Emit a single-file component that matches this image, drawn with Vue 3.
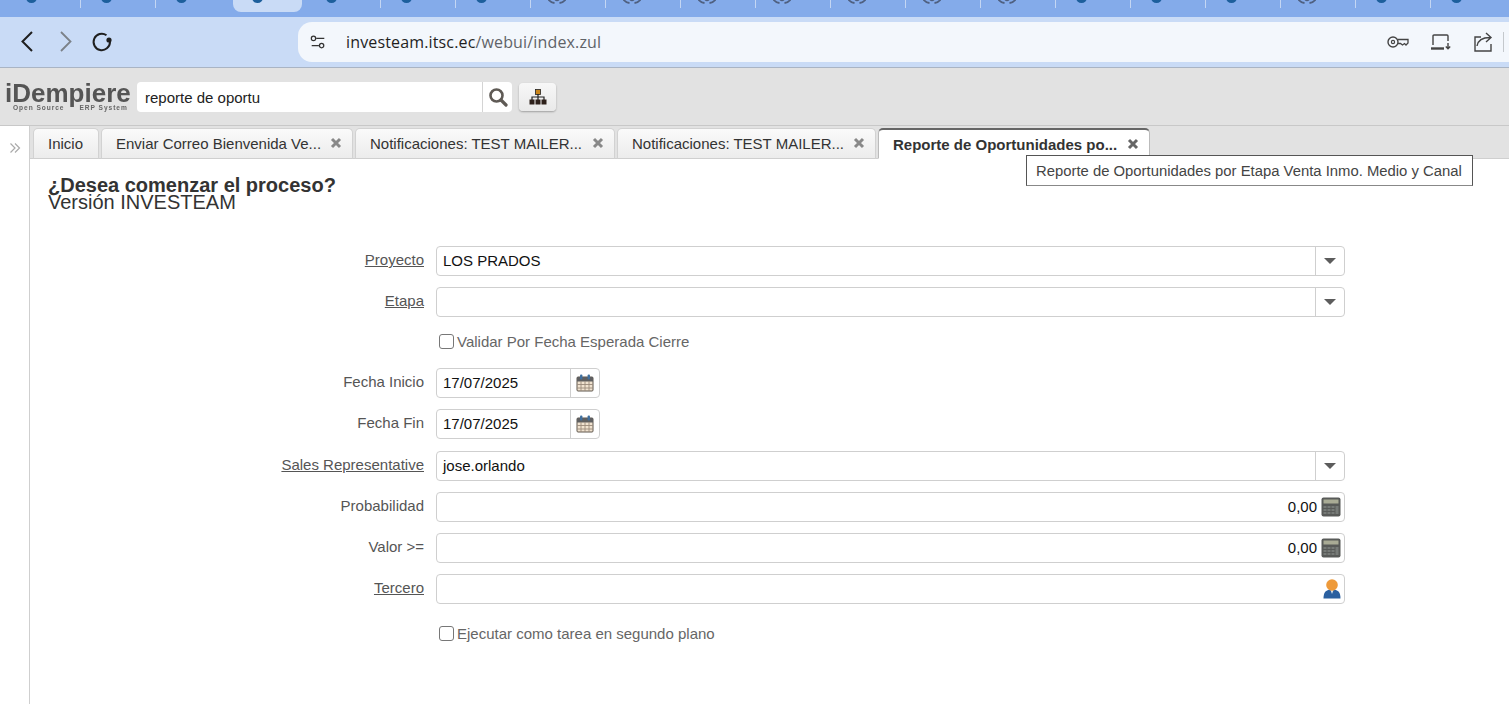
<template>
  <div class="page">
    <!-- browser chrome -->
    <div class="browser-tabs">
      <div v-for="(t, i) in browserTabs" :key="i" class="b-tab" :class="{ active: t === 'active' }">
        <svg v-if="t === 'ring'" class="ring" viewBox="0 0 18 18" width="18" height="18">
          <path d="M0 13 Q2.5 16.5 6.5 17 M11.5 17 Q15.5 16.5 18 13" fill="none" stroke="#4f6080" stroke-width="1.8"/>
          <path d="M7 13.5 Q9 15.5 11 13.5" fill="none" stroke="#4f6080" stroke-width="1.6"/>
        </svg>
        <span v-else class="favicon"></span>
      </div>
    </div>
    <div class="browser-bar">
      <div class="nav-btns">
        <svg class="nav" viewBox="0 0 24 24" width="24" height="24"><path d="M17 3 L7.5 12.5 L17 22" transform="translate(-1 -1)" fill="none" stroke="#1f1f1f" stroke-width="2"/></svg>
        <svg class="nav" viewBox="0 0 24 24" width="24" height="24"><path d="M8 3 L17.5 12.5 L8 22" transform="translate(0 -1)" fill="none" stroke="#7b8188" stroke-width="1.8"/></svg>
        <svg class="nav" viewBox="0 0 24 24" width="24" height="24"><path d="M20 12 A8.2 8.2 0 1 1 16.5 5.2" fill="none" stroke="#1f1f1f" stroke-width="2"/><circle cx="19" cy="10" r="2.6" fill="#1f1f1f"/></svg>
      </div>
      <div class="omnibox">
        <svg viewBox="0 0 20 20" width="18" height="18" class="tune"><circle cx="5" cy="6" r="2.4" fill="none" stroke="#333" stroke-width="1.4"/><path d="M8 6 H17 M3 14 H11" stroke="#333" stroke-width="1.4"/><circle cx="14" cy="14" r="2.4" fill="none" stroke="#333" stroke-width="1.4"/></svg>
        <span class="url"><span class="host">investeam.itsc.ec</span>/webui/index.zul</span>
        <div class="omni-icons">
          <svg viewBox="0 0 22 14" width="22" height="14"><circle cx="6" cy="7" r="5" fill="none" stroke="#444" stroke-width="1.4"/><circle cx="6" cy="7" r="1.6" fill="none" stroke="#444" stroke-width="1.2"/><path d="M11 4.5 H21 V8 L19 10 L17.5 8.5 L15.5 10 L13.5 8.5 H11" fill="none" stroke="#444" stroke-width="1.3"/></svg>
          <svg viewBox="0 0 22 18" width="22" height="18"><path d="M3 12 V3 Q3 2 4 2 H17 Q18 2 18 3 V8" fill="none" stroke="#444" stroke-width="1.4"/><path d="M1 15.5 H14" stroke="#444" stroke-width="2.4"/><path d="M18 10 V15.5 M15.8 13.5 L18 15.8 L20.2 13.5" fill="none" stroke="#444" stroke-width="1.4"/></svg>
          <svg viewBox="0 0 20 20" width="20" height="20"><path d="M8 5 H2 V19 H18 V12" fill="none" stroke="#444" stroke-width="1.4"/><path d="M4 14 C5 8 10 5.5 17 5.5 M13 1 L18 5.5 L13 10" fill="none" stroke="#444" stroke-width="1.4"/></svg>
          <span class="omni-sep"></span>
        </div>
      </div>
    </div>

    <!-- iDempiere header -->
    <header class="app-header">
      <div class="logo">
        <span class="logo-name">iDempiere</span>
        <span class="logo-sub"><span>Open Source</span><span>ERP System</span></span>
      </div>
      <div class="search">
        <span class="search-text">reporte de oportu</span>
        <span class="search-btn">
          <svg viewBox="0 0 20 20" width="20" height="20"><circle cx="8.5" cy="8.5" r="6" fill="none" stroke="#5f5a55" stroke-width="2.6"/><path d="M13 13 L18 18" stroke="#5f5a55" stroke-width="3.2" stroke-linecap="round"/></svg>
        </span>
      </div>
      <button class="tree-btn">
        <svg viewBox="0 0 18 16" width="18" height="16"><rect x="6.5" y="0.5" width="5" height="5" fill="#c9851c" stroke="#222" stroke-width="0.8"/><path d="M9 5 V8 M3 11 V8 H15 V11 M9 8 V11" fill="none" stroke="#222" stroke-width="1.2"/><rect x="0.5" y="10.5" width="5" height="5" fill="#2e211b"/><rect x="6.5" y="10.5" width="5" height="5" fill="#2e211b"/><rect x="12.5" y="10.5" width="5" height="5" fill="#2e211b"/></svg>
      </button>
    </header>

    <div class="workspace">
      <aside class="side">
        <svg viewBox="0 0 12 12" width="12" height="12"><path d="M1.5 1.5 L6 6 L1.5 10.5 M6 1.5 L10.5 6 L6 10.5" fill="none" stroke="#aaa" stroke-width="1.2"/></svg>
      </aside>

      <main class="main">
        <div class="tabstrip">
          <div v-for="(tab, i) in tabs" :key="i" class="tab" :class="{ selected: tab.selected }" :style="{ width: tab.width + 'px' }">
            <span class="tab-label">{{ tab.label }}</span>
            <svg v-if="tab.close" class="tab-x" viewBox="0 0 12 12" width="12" height="12"><path d="M2 2 L10 10 M10 2 L2 10" stroke="currentColor" stroke-width="3"/></svg>
          </div>
        </div>

        <section class="content">
          <div class="process-head">
            <h2>¿Desea comenzar el proceso?</h2>
            <p>Versión INVESTEAM</p>
          </div>

          <div class="form">
            <div v-for="f in fields" :key="f.label" class="row" :class="f.rowClass">
              <label v-if="f.type !== 'check'" class="lbl" :class="{ link: f.link }">{{ f.label }}</label>
              <span v-else></span>

              <label v-if="f.type === 'check'" class="check">
                <input type="checkbox" />
                <span>{{ f.label }}</span>
              </label>

              <div v-else-if="f.type === 'combo'" class="input">
                <span class="val">{{ f.value }}</span>
                <span class="combo-btn"><i class="caret"></i></span>
              </div>

              <div v-else-if="f.type === 'date'" class="input date">
                <span class="val">{{ f.value }}</span>
                <span class="date-btn">
                  <svg viewBox="0 0 18 18" width="18" height="18">
                    <rect x="1" y="3" width="16" height="14" rx="1" fill="#f0e2cf" stroke="#5f564c" stroke-width="1"/>
                    <rect x="1" y="3" width="16" height="4.5" fill="#5f5f60"/>
                    <path d="M1 10.5 H17 M1 14 H17 M5 7 V17 M9 7 V17 M13 7 V17" stroke="#9a8a7a" stroke-width="0.9"/>
                    <rect x="4" y="0.5" width="2.4" height="5" rx="1" fill="#3f6f9f"/>
                    <rect x="11.6" y="0.5" width="2.4" height="5" rx="1" fill="#3f6f9f"/>
                  </svg>
                </span>
              </div>

              <div v-else-if="f.type === 'number'" class="input number">
                <span class="val">{{ f.value }}</span>
                <svg class="calc" viewBox="0 0 20 20" width="20" height="20">
                  <rect x="0.5" y="0.5" width="19" height="19" rx="2" fill="#585a58"/>
                  <rect x="2.5" y="2.5" width="15" height="4" fill="#a9ab95"/>
                  <g fill="#767a77">
                    <rect x="2.5" y="9" width="3" height="2"/><rect x="6.5" y="9" width="3" height="2"/><rect x="10.5" y="9" width="3" height="2"/>
                    <rect x="2.5" y="12" width="3" height="2"/><rect x="6.5" y="12" width="3" height="2"/><rect x="10.5" y="12" width="3" height="2"/>
                    <rect x="2.5" y="15" width="3" height="2"/><rect x="6.5" y="15" width="3" height="2"/><rect x="10.5" y="15" width="3" height="2"/>
                    <rect x="14.5" y="9" width="3" height="8"/>
                  </g>
                </svg>
              </div>

              <div v-else class="input person">
                <svg viewBox="0 0 18 20" width="18" height="20">
                  <path d="M0.5 19.5 C0.5 13 3 10.5 9 10.5 C15 10.5 17.5 13 17.5 19.5 Z" fill="#2b60a0"/>
                  <path d="M7.5 11 L9 15 L10.5 11 Z" fill="#dfe6ee"/>
                  <circle cx="9" cy="6" r="5.8" fill="#ee9a3a"/>
                </svg>
              </div>
            </div>
          </div>

          <div class="tooltip">Reporte de Oportunidades por Etapa Venta Inmo. Medio y Canal</div>
        </section>
      </main>
    </div>
  </div>
</template>

<script setup>
// iconos de las pestañas del navegador: la mayoria azules, algunas con anillo gris
const browserTabs = [
  'dot', 'dot', 'dot', 'active', 'dot', 'dot', 'dot',
  'ring', 'ring', 'ring', 'ring', 'ring', 'ring', 'ring',
  'dot', 'dot', 'dot', 'ring', 'dot', 'dot'
]

const tabs = [
  { label: 'Inicio', width: 66 },
  { label: 'Enviar Correo Bienvenida Ve...', width: 252, close: true },
  { label: 'Notificaciones: TEST MAILER...', width: 260, close: true },
  { label: 'Notificaciones: TEST MAILER...', width: 259, close: true },
  { label: 'Reporte de Oportunidades po...', width: 272, close: true, selected: true }
]

const fields = [
  { label: 'Proyecto', type: 'combo', value: 'LOS PRADOS', link: true },
  { label: 'Etapa', type: 'combo', value: '', link: true },
  { label: 'Validar Por Fecha Esperada Cierre', type: 'check', rowClass: 'tight' },
  { label: 'Fecha Inicio', type: 'date', value: '17/07/2025' },
  { label: 'Fecha Fin', type: 'date', value: '17/07/2025', rowClass: 'wide' },
  { label: 'Sales Representative', type: 'combo', value: 'jose.orlando', link: true },
  { label: 'Probabilidad', type: 'number', value: '0,00' },
  { label: 'Valor >=', type: 'number', value: '0,00' },
  { label: 'Tercero', type: 'search', link: true, rowClass: 'wider' },
  { label: 'Ejecutar como tarea en segundo plano', type: 'check' }
]
</script>

<style>
html, body { margin: 0; padding: 0; overflow: hidden; }
</style>

<style scoped>
.page {
  width: 1509px;
  height: 704px;
  overflow: hidden;
  display: flex;
  flex-direction: column;
  background: #fff;
  font-family: "Liberation Sans", Arial, sans-serif;
}

/* Browser */
.browser-tabs {
  height: 17px;
  flex: none;
  display: flex;
  padding-left: 5px;
  background: #84abea;
  overflow: hidden;
}
.b-tab {
  width: 75px;
  flex: none;
  box-sizing: border-box;
  height: 12px;
  border-left: 1px solid #c4d6f3;
  margin-top: -4px;
  padding-left: 20px;
  display: flex;
  overflow: hidden;
}
.b-tab:first-child { border-left-color: transparent; }
.b-tab.active { background: #c9dbf6; border: 0; margin: -4px 3px 0; width: 69px; height: 16px; padding-left: 19px; border-radius: 0 0 8px 8px; }
.b-tab.active + .b-tab { border-left-color: transparent; }
.favicon { width: 11px; height: 11px; border-radius: 50%; margin-top: -4px; flex: none; background: #1d5f9c; }
.ring { flex: none; margin: -10px 0 0 -3px; }

.browser-bar {
  height: 50px;
  flex: none;
  display: flex;
  align-items: center;
  background: #c9dbf6;
  border-bottom: 1px solid #a9b4c4;
}
.nav-btns { width: 298px; display: flex; gap: 13px; padding-left: 16px; box-sizing: border-box; }
.omnibox {
  flex: 1;
  height: 40px;
  display: flex;
  align-items: center;
  background: #f3f7fc;
  border-radius: 14px 0 0 14px;
  padding-left: 11px;
}
.tune { margin-right: 18px; }
.url { font-family: "Open Sans", sans-serif; font-size: 16px; color: #5f6368; letter-spacing: 0.15px; margin-left: 1px; }
.host { color: #1f1f1f; }
.omni-icons { margin-left: auto; display: flex; align-items: center; gap: 21px; padding-right: 5px; }
.omni-sep { width: 1px; height: 20px; background: #c4c8cc; margin-left: -11px; }

/* App header */
.app-header {
  height: 58px;
  flex: none;
  box-sizing: border-box;
  display: flex;
  align-items: center;
  background: #e2e2e2;
  border-bottom: 1px solid #c8c8c8;
  padding: 0 0 0 5px;
}
.logo { width: 132px; display: flex; flex-direction: column; color: #555; filter: blur(0.35px); margin-top: 1px; }
.logo-name { font-weight: 700; font-size: 26px; line-height: 20px; white-space: nowrap; }
.logo-sub { display: flex; gap: 15px; padding: 1px 0 0 8px; font-size: 6.6px; font-weight: 700; line-height: 7px; letter-spacing: 0.95px; color: #666; white-space: nowrap; }
.search {
  width: 375px;
  height: 30px;
  display: flex;
  align-items: center;
  background: #fff;
  border-radius: 4px;
  box-sizing: border-box;
}
.search-text { flex: 1; padding: 1px 0 0 8px; font-size: 15px; color: #222; }
.search-btn { width: 29px; height: 30px; display: flex; align-items: center; justify-content: center; border-left: 1px solid #d4d4d4; }
.tree-btn {
  width: 37px;
  height: 28px;
  margin-left: 7px;
  display: flex;
  align-items: center;
  justify-content: center;
  padding: 0;
  border: 0;
  border-radius: 4px;
  background: linear-gradient(#f7f7f7, #e9e9e9);
  box-shadow: 0 1px 2px rgba(0, 0, 0, 0.3);
}

/* Workspace */
.workspace { flex: 1; display: flex; min-height: 0; }
.side {
  width: 30px;
  flex: none;
  box-sizing: border-box;
  border-right: 1px solid #cfcfcf;
  display: flex;
  justify-content: center;
  padding-top: 16px;
  background: #fff;
}
.main { flex: 1; display: flex; flex-direction: column; min-width: 0; }
.tabstrip {
  height: 33px;
  flex: none;
  box-sizing: border-box;
  display: flex;
  gap: 2px;
  align-items: flex-end;
  padding-left: 3px;
  background: #e2e2e2;
  border-bottom: 1px solid #cfcfcf;
}
.tab {
  height: 31px;
  flex: none;
  box-sizing: border-box;
  display: flex;
  align-items: center;
  padding: 0 10px 0 14px;
  margin-bottom: -1px;
  font-size: 15px;
  color: #333;
  white-space: nowrap;
  background: linear-gradient(#fafafa, #ececec);
  border: 1px solid #d2d2d2;
  border-bottom: 1px solid #cfcfcf;
  border-radius: 5px 5px 0 0;
}
.tab-label { flex: 1; }
.tab-x { color: #888; margin-top: -1px; }
.tab.selected {
  background: #fff;
  font-weight: 700;
  border-top: 2px solid #666;
  border-left-color: #bbb;
  border-right-color: #bbb;
  border-bottom-color: #fff;
}
.tab.selected .tab-x { color: #666; }

/* Content */
.content { flex: 1; position: relative; padding: 18px 0 0 18px; background: #fff; color: #333; }
.process-head { height: 69px; }
.process-head h2 { margin: 0; font-size: 20px; line-height: 17px; font-weight: 700; color: #333; }
.process-head p { margin: 0; font-size: 20px; line-height: 17px; color: #333; }

.form { width: 1297px; }
.row { display: grid; grid-template-columns: 376px 909px; column-gap: 12px; align-items: center; min-height: 30px; margin-bottom: 11px; }
.row.tight { margin-bottom: 10px; }
.row.wide { margin-bottom: 12px; }
.row.wider { margin-bottom: 16px; }
.lbl { text-align: right; font-size: 15px; color: #555; padding-bottom: 3px; }
.lbl.link { text-decoration: underline; }

.input {
  height: 30px;
  box-sizing: border-box;
  display: flex;
  align-items: center;
  border: 1px solid #cfcfcf;
  border-radius: 4px;
  background: #fff;
  font-size: 15px;
  color: #111;
}
.val { flex: 1; padding: 0 0 1px 6px; white-space: nowrap; }
.combo-btn { width: 28px; height: 100%; display: flex; align-items: center; justify-content: center; border-left: 1px solid #cfcfcf; }
.caret { width: 0; height: 0; border-left: 6px solid transparent; border-right: 6px solid transparent; border-top: 6px solid #5c5c5c; }
.input.date { width: 164px; }
.date-btn { width: 28px; height: 100%; display: flex; align-items: center; justify-content: center; border-left: 1px solid #cfcfcf; }
.input.number .val { text-align: right; padding-right: 4px; }
.calc { margin-right: 3px; }
.input.person { justify-content: flex-end; padding-right: 3px; }

.check { display: flex; align-items: center; gap: 3px; margin-left: 3px; padding-bottom: 3px; font-size: 15px; color: #666; }
.check input {
  appearance: none;
  width: 15px;
  height: 15px;
  margin: 0;
  box-sizing: border-box;
  border: 1.5px solid #777;
  border-radius: 3px;
  background: #fff;
}

.tooltip {
  position: absolute;
  left: 996px;
  top: -4px;
  height: 31px;
  box-sizing: border-box;
  display: flex;
  align-items: center;
  padding: 0 10px 0 9px;
  background: #fff;
  border: 1px solid #555;
  border-bottom-color: #888;
  font-size: 14.85px;
  color: #444;
  white-space: nowrap;
}
</style>
